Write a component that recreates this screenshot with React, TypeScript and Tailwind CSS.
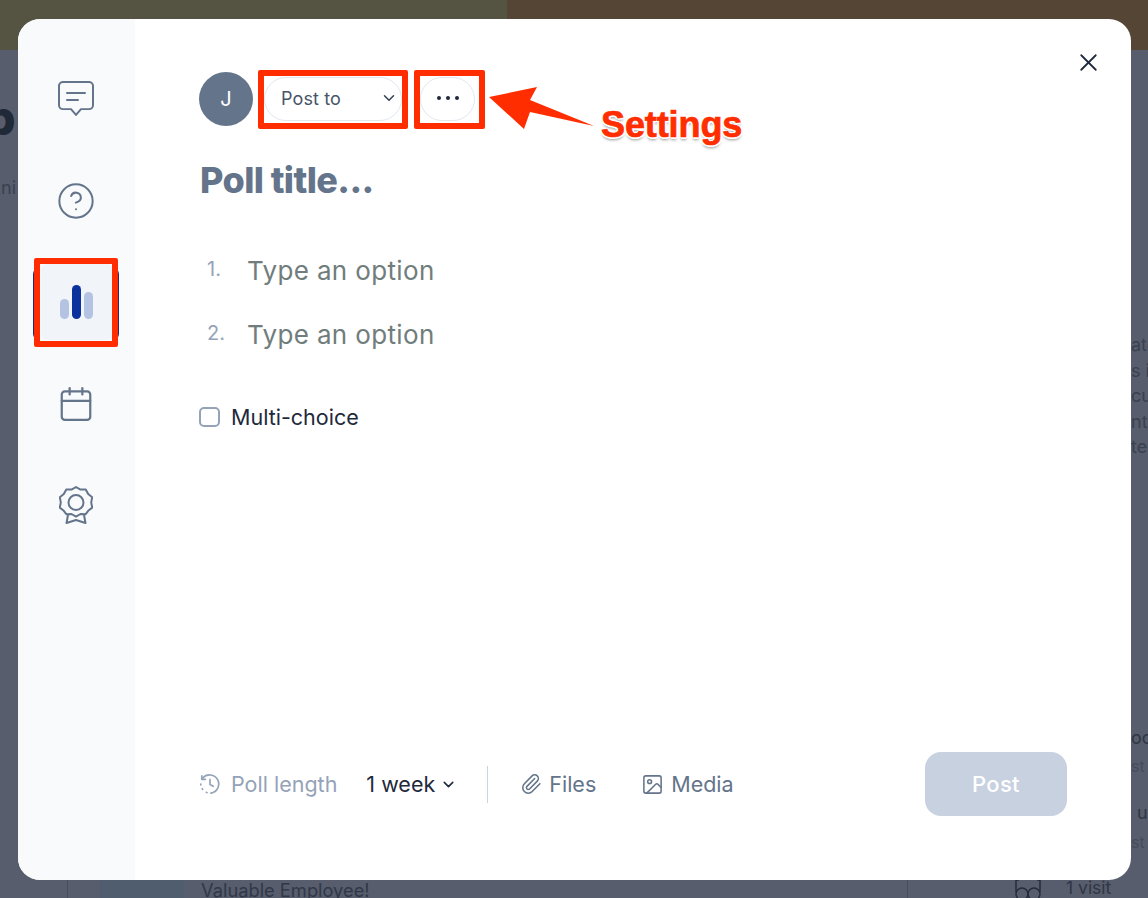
import React from 'react';
import { Calendar, ChevronDown, CircleHelp, Image, Paperclip, X } from 'lucide-react';

const SideIcon: React.FC<{ children: React.ReactNode; active?: boolean }> = ({ children, active }) => (
  <div className={`flex h-[76px] w-[72px] items-center justify-center rounded-md ${active ? 'bg-[#f1f5f9]' : ''}`}>
    {children}
  </div>
);

const PollOption: React.FC<{ n: number }> = ({ n }) => (
  <div className="flex h-[64px] items-center">
    <span className="w-[48px] pb-[2px] pl-[8px] text-[20px] text-[#94a3b8]">{n}.</span>
    <span className="text-[26px] tracking-[0.35px] text-[#707d7c]">Type an option</span>
  </div>
);

const App: React.FC = () => {
  return (
    <div className="relative h-[898px] w-[1148px] overflow-hidden bg-[#575d6c] pt-[19px] pl-[18px] font-['Inter',sans-serif]">
      {/* page behind the modal */}
      <div className="absolute inset-x-0 top-0 flex h-[50px] bg-[#555443]">
        <div className="ml-[507px] flex-1 bg-[#544534]"></div>
      </div>
      <div className="absolute left-[-15px] top-[90px] text-[48px] leading-[56px] font-extrabold text-[#1f2937]">p</div>
      <div className="absolute left-[1px] top-[178px] whitespace-nowrap text-[18px] leading-[20px] text-[#3a4150]">ni</div>
      <div className="absolute left-[1131px] top-[332px] w-[17px] overflow-hidden whitespace-nowrap text-[18px] leading-[25.5px] text-[#3a4150]">
        <div>ate</div>
        <div>s i</div>
        <div>cut</div>
        <div>nt</div>
        <div>tec</div>
      </div>
      <div className="absolute left-[1131px] top-[726px] w-[17px] overflow-hidden text-[18px] leading-[24px] text-[#2f3645]">oo</div>
      <div className="absolute left-[1131px] top-[755px] w-[17px] overflow-hidden text-[16px] leading-[22px] text-[#454c5b]">st</div>
      <div className="absolute left-[1137px] top-[801px] text-[18px] leading-[24px] text-[#2f3645]">u</div>
      <div className="absolute left-[1131px] top-[831px] w-[17px] overflow-hidden text-[16px] leading-[22px] text-[#454c5b]">st</div>
      <div className="absolute left-[67px] top-[880px] h-[18px] w-px bg-[#474d5b]"></div>
      <div className="absolute left-[100px] top-[880px] h-[18px] w-[84px] bg-[#4f5d6e]"></div>
      <div className="absolute left-[201px] top-[878px] text-[18.3px] leading-[24px] text-[#303848]">Valuable Employee!</div>
      <div className="absolute left-[907px] top-[880px] h-[18px] w-px bg-[#474d5b]"></div>
      <svg className="absolute left-[1014px] top-[880px]" width="28" height="18" viewBox="0 0 28 18" fill="none" stroke="#262b38" strokeWidth="1.5">
        <path d="M2 0v12M26 0v12M2 0h3M26 0h-3" />
        <circle cx="8" cy="14" r="6" />
        <circle cx="20" cy="14" r="6" />
      </svg>
      <div className="absolute left-[1066px] top-[876px] text-[17.5px] leading-[24px] text-[#2f3645]">1 visit</div>

      {/* modal */}
      <div className="relative flex h-[861px] w-[1113px] overflow-hidden rounded-[22px] bg-white">
        <div className="flex w-[117px] flex-col items-center gap-[25.5px] bg-[#f8fafc] pt-[42px]">
          <SideIcon>
            <svg className="mt-[2px] -ml-[2px]" width="40" height="38" viewBox="0 0 40 38" fill="none" stroke="#64748b" strokeWidth="2" strokeLinecap="round" strokeLinejoin="round">
              <path d="M7 2h26a4 4 0 0 1 4 4v20a4 4 0 0 1-4 4h-8l-5 6-5-6H7a4 4 0 0 1-4-4V6a4 4 0 0 1 4-4z" transform="translate(0 -1) scale(1 .97)" />
              <path d="M11 12h18M11 19h11" />
            </svg>
          </SideIcon>
          <SideIcon>
            <CircleHelp className="-ml-[1px]" size={40} strokeWidth={1.2} color="#64748b" />
          </SideIcon>
          <SideIcon active>
            <svg className="-ml-[1px]" width="33" height="34" viewBox="0 0 33 34" fill="#b5c3e2">
              <rect x="0" y="14" width="9" height="20" rx="4.5" />
              <rect x="12" y="0" width="9" height="34" rx="4.5" fill="#0b319c" />
              <rect x="24" y="7" width="9" height="27" rx="4.5" />
            </svg>
          </SideIcon>
          <SideIcon>
            <Calendar className="-ml-[1px]" size={38} strokeWidth={1.4} color="#64748b" />
          </SideIcon>
          <SideIcon>
            <svg className="-ml-[1px]" width="34" height="38" viewBox="0 0 34 38" fill="none" stroke="#64748b" strokeWidth="2" strokeLinejoin="round">
              <path d="M17 1l4.500 2.600 5.200-.2 2.500 4.600 4 3.200-1 5.200 1 5.200-4 3.200-2.500 3.400-5.200-.2-4.500 2.600-4.500-2.600-5.200.2-2.500-3.400-4-3.200 1-5.200-1-5.200 4-3.200 2.500-4.600 5.200.2z" />
              <circle cx="17" cy="16.500" r="7.500" />
              <path d="M9 29l-1.500 8 9.500-3 9.500 3-1.500-8" />
            </svg>
          </SideIcon>
        </div>

        <div className="flex flex-1 flex-col pt-[53px] pr-[64px] pb-[64px] pl-[64px]">
          <div className="flex items-center">
            <div className="flex h-[54px] w-[54px] items-center justify-center rounded-full bg-[#64748b] text-[20px] text-white">J</div>
            <div className="ml-[11px] flex h-[44px] w-[138px] items-center justify-between rounded-full border border-[#e2e8f0] pr-[3px] pb-[2px] pl-[16px]">
              <span className="text-[18px] tracking-[0.1px] text-[#475569]">Post to</span>
              <ChevronDown size={18} strokeWidth={2} color="#334155" />
            </div>
            <div className="ml-[18px] flex h-[44px] w-[55px] items-center justify-center gap-[5px] rounded-[22px] border border-[#e2e8f0] pb-[2px]">
              <span className="h-[4px] w-[4px] rounded-full bg-[#1e293b]"></span>
              <span className="h-[4px] w-[4px] rounded-full bg-[#1e293b]"></span>
              <span className="h-[4px] w-[4px] rounded-full bg-[#1e293b]"></span>
            </div>
          </div>

          <div className="mt-[28px] ml-[1px] text-[36px] leading-[52px] font-extrabold tracking-[-0.6px] text-[#64748b]">Poll title...</div>

          <div className="mt-[32px] flex flex-col">
            <PollOption n={1} />
            <PollOption n={2} />
          </div>

          <div className="mt-[35px] flex items-center gap-[11px]">
            <div className="h-[20px] w-[21px] rounded-[5px] border-2 border-[#94a3b8]"></div>
            <span className="text-[21.5px] text-[#1e293b]">Multi-choice</span>
          </div>

          <div className="mt-auto flex items-center justify-between">
            <div className="flex items-center text-[21.5px]">
              <svg width="22" height="22" viewBox="0 0 24 24" fill="none" stroke="#94a3b8" strokeWidth="1.8" strokeLinecap="round" strokeLinejoin="round">
                <path d="M4 5.500A10 10 0 1 1 13 22M3 3v4h4M12 7v5.500l3.500 2" />
                <path d="M2 12v1M3.500 17l.5.800M8 21l.8.400" />
              </svg>
              <span className="ml-[10px] text-[#94a3b8]">Poll length</span>
              <span className="ml-[29px] text-[#1e293b]">1 week</span>
              <ChevronDown className="ml-[5px]" size={17} strokeWidth={2.2} color="#1e293b" />
              <div className="ml-[30px] h-[37px] w-px bg-[#cbd5e1]"></div>
              <Paperclip className="ml-[32px]" size={22} strokeWidth={1.7} color="#64748b" />
              <span className="ml-[7px] text-[#64748b]">Files</span>
              <Image className="ml-[45px]" size={23} strokeWidth={1.6} color="#64748b" />
              <span className="ml-[7px] text-[#64748b]">Media</span>
            </div>
            <div className="flex h-[64px] w-[142px] items-center justify-center rounded-[16px] bg-[#c8d1e0] text-[22px] font-medium tracking-[0.3px] text-white">Post</div>
          </div>
        </div>

        <X className="absolute top-[29px] right-[28px]" size={29} strokeWidth={1.5} color="#1e293b" />
      </div>

      {/* annotations */}
      <div className="absolute top-[268px] left-[33px] h-[72px] w-[86px] rounded-md border-x-2 border-[#1e2a78]"></div>
      <div className="absolute top-[258px] left-[34px] h-[89px] w-[84px] rounded-[2px] border-[6px] border-[#ff2d00]"></div>
      <div className="absolute top-[70px] left-[258px] h-[59px] w-[150px] rounded-[2px] border-[6px] border-[#ff2d00]"></div>
      <div className="absolute top-[70px] left-[414px] h-[59px] w-[71px] rounded-[2px] border-[6px] border-[#ff2d00]"></div>
      <svg className="absolute top-[84px] left-[487px]" width="110" height="48" viewBox="487 84 110 48" fill="#ff2d00">
        <path d="M489 97L537 87L530 100L594 126L530 112L524 129z" />
      </svg>
      <div className="absolute top-[104px] left-[601px] font-['Liberation_Sans',sans-serif] text-[36px] leading-[42px] font-bold tracking-[-0.1px] text-[#ff2d00] [-webkit-text-stroke:0.7px_#ff2d00] [text-shadow:0_2px_0_#fff,2px_1px_0_#fff,-2px_1px_0_#fff,1px_-1px_0_#fff,-1px_-1px_0_#fff,0_3px_3px_rgba(0,0,0,0.4)]">
        Settings
      </div>
    </div>
  );
};

export default App;
